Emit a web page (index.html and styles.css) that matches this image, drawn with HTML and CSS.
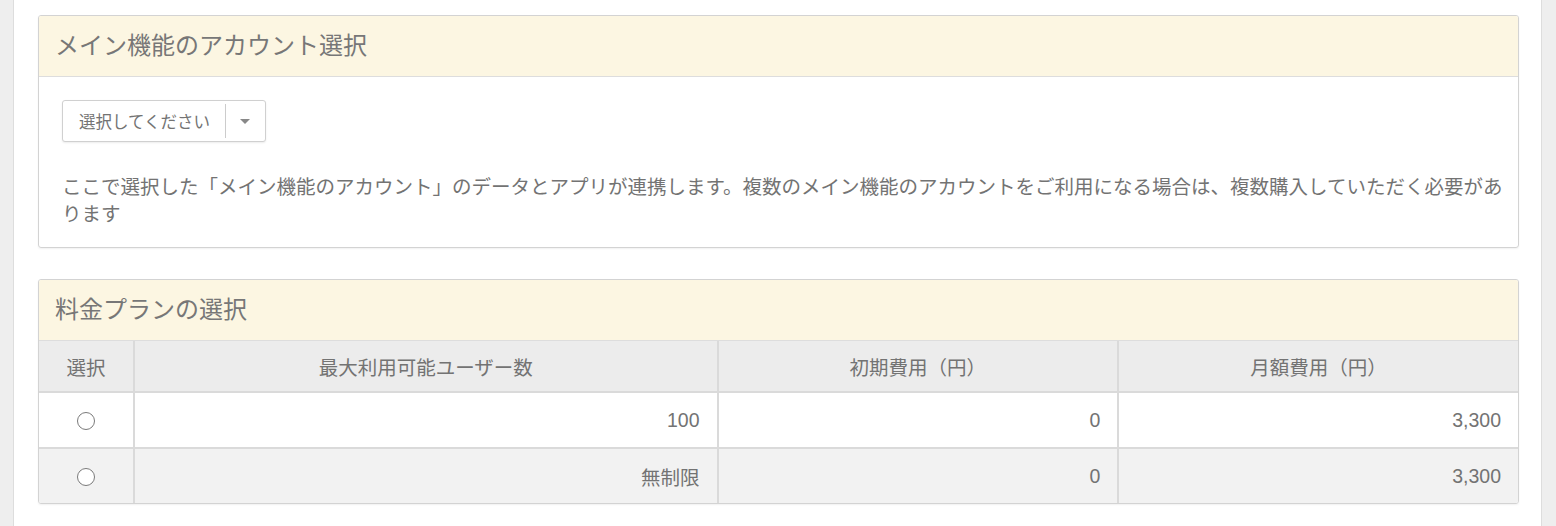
FILE: index.html
```html
<!DOCTYPE html>
<html lang="ja">
<head>
  <meta charset="UTF-8">
  <title>アカウント選択</title>
  <link rel="stylesheet" href="styles.css">
</head>
<body>
  <div class="page">

    <div class="panel">
      <div class="panel-heading">メイン機能のアカウント選択</div>
      <div class="panel-body">
        <div class="select-box">
          <span class="select-label">選択してください</span>
          <span class="select-caret"></span>
        </div>
        <p class="note">ここで選択した「メイン機能のアカウント」のデータとアプリが連携します。複数のメイン機能のアカウントをご利用になる場合は、複数購入していただく必要があります</p>
      </div>
    </div>

    <div class="panel">
      <div class="panel-heading">料金プランの選択</div>
      <table class="plan-table">
        <thead>
          <tr>
            <th class="col-select">選択</th>
            <th class="col-users">最大利用可能ユーザー数</th>
            <th class="col-price">初期費用（円）</th>
            <th class="col-price">月額費用（円）</th>
          </tr>
        </thead>
        <tbody>
          <tr>
            <td class="col-select"><span class="radio"></span></td>
            <td>100</td>
            <td>0</td>
            <td>3,300</td>
          </tr>
          <tr class="striped">
            <td class="col-select"><span class="radio"></span></td>
            <td>無制限</td>
            <td>0</td>
            <td>3,300</td>
          </tr>
        </tbody>
      </table>
    </div>

  </div>
</body>
</html>
```

FILE: styles.css
```css
body {
  margin: 0;
  background-color: #eeeeee;
  font-family: "Liberation Sans", "Noto Sans CJK JP", sans-serif;
  color: #737373;
}

.page {
  margin: 0 14px 0 13px;
  min-height: 526px;
  background-color: #fff;
  border-left: 1px solid #ddd;
  border-right: 1px solid #ddd;
  padding: 15px 22px 0 24px;
  box-sizing: border-box;
}

.panel {
  border: 1px solid #d3d3d3;
  border-radius: 3px;
  box-shadow: 0 1px 2px rgba(0, 0, 0, 0.06);
  margin-bottom: 31px;
  overflow: hidden;
}

.panel-heading {
  background-color: #fcf6e2;
  border-bottom: 1px solid #ddd;
  height: 60px;
  line-height: 60px;
  padding-left: 16px;
  font-size: 24px;
  color: #777;
}

.panel-body {
  padding: 23px 6px 19px 23px;
}

/* dropdown */
.select-box {
  display: inline-flex;
  align-items: stretch;
  height: 40px;
  border: 1px solid #d0d0d0;
  border-radius: 3px;
  box-shadow: 0 1px 2px rgba(0, 0, 0, 0.08);
  background: #fff;
}

.select-label {
  display: flex;
  align-items: center;
  padding: 0 15px 0 16px;
  font-size: 16.5px;
  border-right: 1px solid #ccc;
  margin: 3px 0;
}

.select-caret {
  width: 39px;
  position: relative;
}

.select-caret:after {
  content: '';
  position: absolute;
  left: 14px;
  top: 18px;
  border-left: 5px solid transparent;
  border-right: 5px solid transparent;
  border-top: 5px solid #888;
}

.note {
  margin: 32px 0 0 0;
  font-size: 19.5px;
  line-height: 27px;
}

/* plan table */
.plan-table {
  width: 100%;
  border-collapse: collapse;
  font-size: 19.5px;
}

.plan-table th,
.plan-table td {
  border-left: 2px solid #dadada;
  border-top: 2px solid #dadada;
  padding: 0 17px;
}

.plan-table tr > :first-child {
  border-left: none;
}

.plan-table thead th {
  height: 50px;
  background-color: #ececec;
  font-weight: normal;
  text-align: center;
  border-top: none;
}

.plan-table td {
  height: 54px;
  text-align: right;
}

.plan-table .striped td {
  background-color: #f2f2f2;
}

.plan-table .col-select {
  width: 60px;
  text-align: center;
}

.plan-table .col-users {
  width: 548px;
}

.plan-table .col-price {
  width: 365px;
}

.radio {
  display: inline-block;
  box-sizing: border-box;
  width: 18px;
  height: 18px;
  border: 1.5px solid #7a7a7a;
  border-radius: 50%;
  background: #fff;
  vertical-align: middle;
}
```
